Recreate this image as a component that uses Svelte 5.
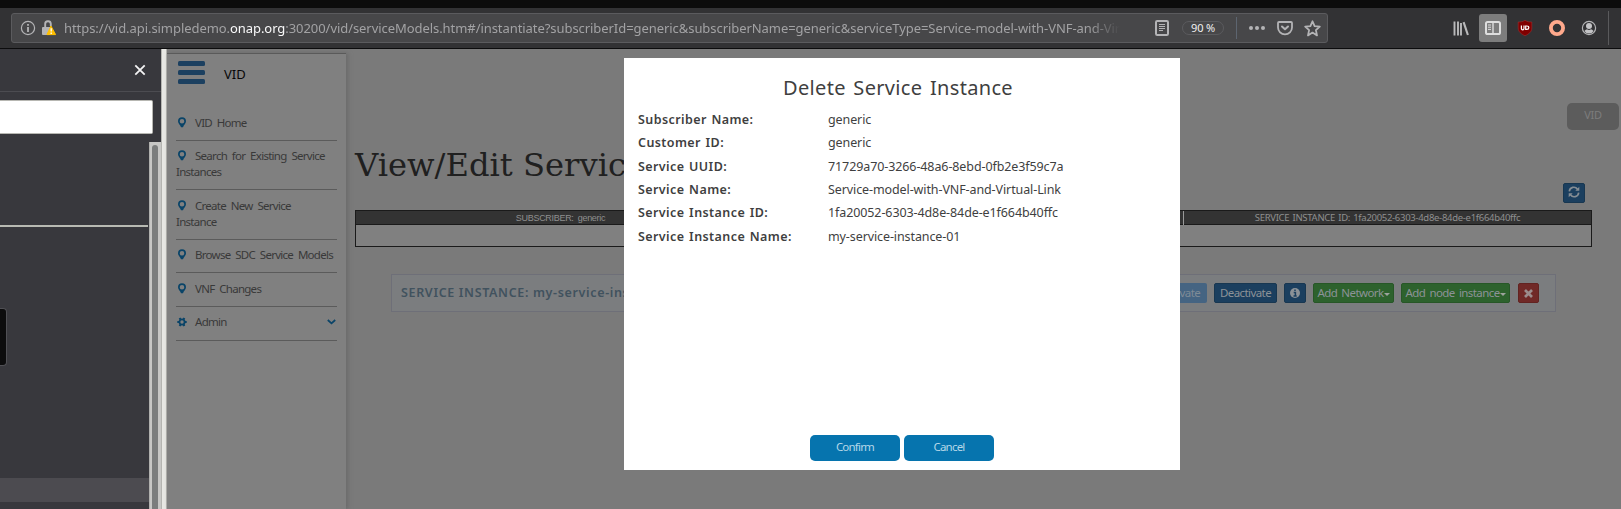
<script>
  const menu = [
    { label: 'VID Home', h: 34, top: 8 },
    { label: 'Search for Existing Service Instances', h: 49, top: 7 },
    { label: 'Create New Service Instance', h: 50, top: 8 },
    { label: 'Browse SDC Service Models', h: 33, top: 7 },
    { label: 'VNF Changes', h: 34, top: 8 },
    { label: 'Admin', h: 34, top: 7, gear: true }
  ];
  const details = [
    ['Subscriber Name:', 'generic'],
    ['Customer ID:', 'generic'],
    ['Service UUID:', '71729a70-3266-48a6-8ebd-0fb2e3f59c7a'],
    ['Service Name:', 'Service-model-with-VNF-and-Virtual-Link'],
    ['Service Instance ID:', '1fa20052-6303-4d8e-84de-e1f664b40ffc'],
    ['Service Instance Name:', 'my-service-instance-01']
  ];
</script>

<div class="window">
  <div class="tabs"></div>
  <header>
    <div class="urlbar">
      <svg class="info" width="16" height="16" viewBox="0 0 16 16" fill="none" stroke="#b4b4b6" stroke-width="1.2"><circle cx="8" cy="8" r="6.6" /><path d="M8 7v5M8 4v1.7" stroke-width="1.8" /></svg>
      <svg class="lock" width="16" height="16" viewBox="0 0 16 16"><path d="M4.2 8V4.2a2.800 2.800 0 0 1 5.600-.4V6" fill="none" stroke="#b4b4b6" stroke-width="1.9" /><rect x="1" y="7" width="9" height="8" rx="1" fill="#b4b4b6" /><path d="M10 6 14.600 14.600H5.900Z" fill="#ffbf00" stroke="#ffbf00" stroke-width="1" stroke-linejoin="round" /><path d="M10.2 8.3v3.2M10.2 12.5V14" stroke="#fff" stroke-width="1.3" /></svg>
      <div class="url">https://vid.api.simpledemo.<b>onap.org</b>:30200/vid/serviceModels.htm#/instantiate?subscriberId=generic&amp;subscriberName=generic&amp;serviceType=Service-model-with-VNF-and-Virtual</div>
      <svg class="reader" width="14" height="16" viewBox="0 0 14 16" fill="none" stroke="#b4b4b6"><rect x="1" y="1" width="12" height="14" rx="1.2" stroke-width="2" /><path d="M4 4.5h6M4 6.5h6M4 8.5h6M4 10.5h4" /></svg>
      <span class="zoom">90 %</span>
      <i class="vline"></i>
      <svg class="dots" width="16" height="16" viewBox="0 0 16 16" fill="#b4b4b6"><circle cx="2" cy="8" r="2" /><circle cx="8" cy="8" r="2" /><circle cx="14" cy="8" r="2" /></svg>
      <svg class="pocket" width="16" height="16" viewBox="0 0 16 16" fill="none" stroke="#b4b4b6" stroke-width="2" stroke-linejoin="round" stroke-linecap="round"><path d="M2 2h12q1 0 1 1v4.5a7 6.8 0 0 1-14 0V3q0-1 1-1Z" stroke-width="1.8" /><path d="m5 6.5 3 2.8 3-2.8" /></svg>
      <svg class="star" width="17" height="17" viewBox="0 0 17 17" fill="none" stroke="#b4b4b6" stroke-width="1.8" stroke-linejoin="round"><path d="m8.5 1.3 2.1 4.8 5.2.5-3.9 3.5 1.1 5.3-4.5-2.8L4 15.4l1.1-5.3-3.9-3.5 5.2-.5Z" /></svg>
    </div>
    <div class="tools">
      <svg width="16" height="16" viewBox="0 0 16 16" stroke="#b9b9ba" stroke-width="2" fill="none"><path d="M1.5 1.5v14M5 1.5v14M8 3v12.5" stroke-width="1.9" /><path d="m10.6 2.2 4.3 12.8" stroke-width="2.1" /></svg>
      <div class="active"><svg width="16" height="14" viewBox="0 0 16 14" stroke="#dedede" fill="none"><rect x="1" y="1" width="14" height="12" rx="1.6" stroke-width="2" /><path d="M8 1v12" stroke-width="1.4" /><path d="M3 4h3M3 6.2h3M3 8.4h3" /></svg></div>
      <svg class="shield" width="16" height="16" viewBox="0 0 16 16"><path d="M8 .3C10 1.8 12.500 2 14.800 2v6c0 4-3.200 6-6.800 7.800C4.400 14 1.200 12 1.200 8V2C3.500 2 6 1.800 8 .3Z" fill="#800000" stroke="#a33" stroke-width=".5" /><path d="M4.400 5.500v3q0 1.300 1.300 1.300t1.300-1.300v-3" fill="none" stroke="#fff" stroke-width="1.200" /><path d="M8.700 6h1.100q2 0 2 1.700t-2 1.700H8.700Z" fill="none" stroke="#fff" stroke-width="1.200" /></svg>
      <svg class="ring" width="16" height="16" viewBox="0 0 16 16"><circle cx="8" cy="8" r="6.100" fill="none" stroke="#ffa98c" stroke-width="3.800" /></svg>
      <svg class="user" width="16" height="16" viewBox="0 0 16 16"><circle cx="8" cy="8" r="6.600" fill="none" stroke="#b4b4b6" stroke-width="1.200" /><circle cx="8" cy="6" r="3" fill="#c4c4c6" /><path d="M3.400 11Q5 9.300 6 9.300q2 1.500 4 0 1 0 2.600 1.700Q11 13.500 8 13.500T3.400 11Z" fill="#c4c4c6" /></svg>
      <i></i>
    </div>
  </header>

  <div class="content">
    <aside class="panel">
      <div class="panelhead"><svg width="12" height="12" viewBox="0 0 12 12" stroke="#f4f4f5" stroke-width="1.800"><path d="m1.300 1.300 9.400 9.400M10.700 1.300 1.300 10.700" /></svg></div>
      <div class="search"></div>
      <div class="tree">
        <div class="list"><div class="rule"></div><div class="thumbbox"></div><div class="selected"></div></div>
        <div class="scroll"><i></i></div>
      </div>
    </aside>
    <div class="splitter"></div>

    <div class="page">
      <nav>
        <div class="brand">
          <div class="burger"><i></i><i></i><i></i></div>
          <span>VID</span>
        </div>
        <ul>
          {#each menu as m}
            <li style="height:{m.h}px;padding-top:{m.top}px">
              {#if m.gear}
                <svg width="10" height="10" viewBox="0 0 10 10" fill="none" stroke="#0a4468"><circle cx="5" cy="5" r="2.600" stroke-width="1.800" /><path d="M7.900 5H9.700M6.500 7.500l.9 1.600M3.500 7.500l-.9 1.600M2.100 5H.3M3.500 2.500 2.600.9M6.500 2.500l.9-1.600" stroke-width="2" /></svg>
              {:else}
                <svg width="10" height="11" viewBox="0 0 10 11" fill="#0a4468" fill-rule="evenodd"><path d="M5 .3a4 4 0 0 1 4 4C9 6.700 6.800 7.600 6 10.200H4C3.200 7.600 1 6.700 1 4.300a4 4 0 0 1 4-4ZM5 2a2.300 2.300 0 1 0 0 4.600A2.300 2.300 0 0 0 5 2Z" /></svg>
              {/if}<span>{m.label}</span>
              {#if m.gear}<svg class="chev" width="9" height="6" viewBox="0 0 9 6" fill="none" stroke="#0a4468" stroke-width="1.800"><path d="m.8 1 3.700 3.300L8.200 1" /></svg>{/if}
            </li>
          {/each}
        </ul>
      </nav>

      <main>
        <div class="user-row"><span class="vidbtn">VID</span></div>
        <div class="title-row">
          <h1>View/Edit Service</h1>
          <span class="btn blue refresh"><svg width="12" height="12" viewBox="0 0 12 12" fill="none" stroke="#858d94" stroke-width="1.600"><path d="M1.300 5.300A4.500 4.500 0 0 1 9.500 3.200M10.700 6.700A4.500 4.500 0 0 1 2.500 8.800" /><path d="M11.300.8v4H7.300ZM.7 11.200v-4h4Z" fill="#858d94" stroke="none" /></svg></span>
        </div>
        <div class="table">
          <div class="thead"><span>SUBSCRIBER: generic</span><span></span><span class="sid">SERVICE INSTANCE ID: 1fa20052-6303-4d8e-84de-e1f664b40ffc</span></div>
          <div class="tbody"></div>
        </div>
        <div class="instance">
          <strong>SERVICE INSTANCE: my-service-instance-01</strong>
          <div class="actions">
            <span class="btn faded" style="width:52px">Activate</span>
            <span class="btn blue" style="width:63px">Deactivate</span>
            <span class="btn blue" style="width:22px"><svg width="10" height="10" viewBox="0 0 10 10"><circle cx="5" cy="5" r="5" fill="#8c9297" /><path d="M5 1.400v1.700M3.700 4.400h1.700v3.200M3.500 7.900h3.200" stroke="#1c4060" stroke-width="1.500" fill="none" /></svg></span>
            <span class="btn green" style="width:81px">Add Network<i></i></span>
            <span class="btn green" style="width:109px">Add node instance<i></i></span>
            <span class="btn red" style="width:21px"><svg width="9" height="9" viewBox="0 0 9 9" stroke="#9b8c8c" stroke-width="2.700"><path d="m1 1 7 7M8 1 1 8" /></svg></span>
          </div>
        </div>
      </main>

      <div class="modal" role="dialog">
        <h2>Delete Service Instance</h2>
        <dl>
          {#each details as [k, v]}
            <dt>{k}</dt><dd>{v}</dd>
          {/each}
        </dl>
        <div class="foot"><button>Confirm</button><button>Cancel</button></div>
      </div>
    </div>
  </div>
</div>

<style>
  :global(body) { margin: 0; overflow: hidden; background: #7a7a7a; }
  * { box-sizing: border-box; }
  svg { display: block; flex: none; }
  .window { width: 1621px; height: 509px; overflow: hidden; display: flex; flex-direction: column; font-family: 'Noto Sans', sans-serif; }
  .tabs { height: 8px; background: #0c0c0c; }
  header { height: 41px; background: #323234; border-bottom: 1px solid #0c0c0d; display: flex; padding: 5px 0 0 11px; }
  .urlbar { width: 1317px; flex: none; height: 30px; border: 1px solid #5b5b5e; border-radius: 3px; background: #474749; display: flex; align-items: center; }
  .info { margin-left: 8px; }
  .lock { margin-left: 5px; }
  .url { margin-left: 7px; width: 1056px; font-size: 13px; letter-spacing: -.06px; line-height: 28px; color: #a2a2a4; white-space: nowrap; overflow: hidden; -webkit-mask-image: linear-gradient(to right, #000 97%, transparent); mask-image: linear-gradient(to right, #000 97%, transparent); }
  .url b { font-weight: 400; color: #f9f9fa; }
  .reader { margin-left: 35px; }
  .zoom { margin-left: 13px; width: 42px; height: 14px; border: 1px solid #5b5b5e; border-radius: 7px; font-size: 11px; letter-spacing: -.2px; line-height: 11px; text-align: center; color: #f0f0f0; }
  .vline { width: 1px; height: 22px; margin: 0 12px; background: #5d6570; }
  .pocket { margin-left: 12px; }
  .star { margin-left: 11px; }
  .tools { display: flex; align-items: center; height: 30px; margin-left: 125px; }
  .active { width: 28px; height: 28px; border-radius: 3px; background: #7d7d7d; display: flex; align-items: center; justify-content: center; margin: 0 10px 0 10px; }
  .ring { margin-left: 16px; }
  .user { margin-left: 16px; }
  .tools i { width: 1px; height: 34px; background: #5a5a5c; margin-left: 11px; }

  .content { flex: 1; display: flex; }
  .panel { width: 161px; background: #38383d; display: flex; flex-direction: column; }
  .panelhead { height: 43px; border-bottom: 1px solid #4c4c51; padding: 15px 0 0 134px; }
  .search { width: 153px; height: 34px; margin-top: 8px; background: #fff; border: 1px solid #b7b7b2; border-left: 0; border-radius: 0 2px 2px 0; }
  .tree { flex: 1; margin-top: 8px; display: flex; }
  .list { width: 149px; }
  .rule { height: 2px; width: 148px; margin-top: 83px; background: #b8bab3; }
  .thumbbox { width: 7px; height: 58px; margin-top: 81px; background: #0c0c0d; border: 1px solid #505055; border-left: 0; border-radius: 0 4px 4px 0; }
  .selected { height: 24px; margin-top: 112px; background: #4c4b50; }
  .scroll { width: 12px; background: #c7c7c5; border-left: 1px solid #b0b0ae; padding: 3px 3px 0 2px; }
  .scroll i { display: block; width: 6px; height: 100%; background: #7b7d7d; border-radius: 3px 3px 0 0; }
  .splitter { width: 6px; background: #e8e8e4; border: solid #b5b5b1; border-width: 0 1px; }

  .page { flex: 1; background: #7a7a7a; display: flex; position: relative; }
  nav { width: 179px; margin-top: 4px; background: #808080; border-top: 1px solid #5a5a5a; box-shadow: 2px 0 4px #6a6a6a; }
  .brand { height: 53px; display: flex; padding: 7px 0 0 11px; }
  .burger { width: 27px; }
  .burger i { display: block; height: 5px; margin-bottom: 4px; border-radius: 1.500px; background: #1c4060; }
  .brand span { margin: 3px 0 0 19px; font-size: 13px; line-height: 20px; color: #080808; }
  ul { list-style: none; margin: 0; padding: 0 9px; }
  li { border-bottom: 1px solid #5b5b5b; padding-right: 3px; font-size: 11.500px; line-height: 16px; letter-spacing: -.72px; word-spacing: 2.500px; color: #393939; position: relative; }
  li svg { display: inline-block; vertical-align: -1px; margin: 0 9px 0 1px; }
  li span { margin-left: -1px; }
  li .chev { position: absolute; right: 1px; top: 12px; margin: 0; }

  main { width: 1275px; }
  .user-row { height: 81px; padding: 54px 2px 0 0; display: flex; justify-content: flex-end; }
  .vidbtn { width: 52px; height: 27px; border-radius: 5px; background: #5c5c5c; color: #7c7c7c; font-size: 11px; letter-spacing: -.3px; line-height: 24px; text-align: center; }
  .title-row { height: 80px; padding: 9px 36px 0 9px; display: flex; justify-content: space-between; }
  h1 { margin: 1px 0 0; font: 400 32.200px/50px 'DejaVu Serif', serif; color: #202020; }
  .refresh { width: 22px; margin-top: 44px; padding-bottom: 2px; }
  .table { margin: 0 29px 0 9px; border: 1px solid #1a1a1a; height: 37px; }
  .thead { height: 14px; background: #333; border-bottom: 1px solid #1a1a1a; display: grid; grid-template-columns: 409px 418px 1fr; font: 9px/14px 'Liberation Sans', sans-serif; letter-spacing: -.3px; word-spacing: 2px; color: #8f8f8f; text-align: center; }
  .thead .sid { font: 9.500px/13px 'Noto Sans', sans-serif; letter-spacing: -.29px; word-spacing: 1px; border-left: 1px solid #999; }
  .tbody { height: 21px; background: #808080; }
  .instance { width: 1165px; height: 38px; margin: 27px 0 0 45px; border: 1px solid #6e6f78; background: #7b7d7f; display: flex; align-items: center; justify-content: space-between; padding: 0 16px 0 9px; }
  strong { font-size: 12.500px; font-weight: 600; line-height: 18px; letter-spacing: .65px; color: #41525e; padding-bottom: 1px; }
  .actions { display: flex; gap: 7px; }
  .btn { height: 20px; border-radius: 2px; display: flex; align-items: center; justify-content: center; font-size: 11.500px; letter-spacing: -.58px; word-spacing: 1.800px; line-height: 16px; color: #8c9297; white-space: nowrap; }
  .blue { background: #1b3f5f; border: 1px solid #183751; }
  .faded { background: #456482; color: #7f8b96; }
  .green { background: #2d622d; border: 1px solid #275727; }
  .red { background: #702927; border: 1px solid #622321; margin-left: 1px; }
  .btn i { border: solid transparent; border-width: 3px 3px 0; border-top-color: #9da39d; margin-top: 2px; }

  .modal { position: absolute; left: 457px; top: 9px; width: 556px; height: 412px; background: #fff; color: #3f3f3f; padding: 16px 14px 9px 14px; display: flex; flex-direction: column; }
  h2 { margin: 0 8px 0 0; font-size: 20px; line-height: 28px; font-weight: 400; text-align: center; letter-spacing: .33px; word-spacing: 2px; }
  dl { margin: 5.850px 0 0; display: grid; grid-template-columns: 190px 1fr; grid-auto-rows: 23.400px; font-size: 12.500px; line-height: 23px; flex: 1; }
  dt { font-weight: 600; letter-spacing: .41px; word-spacing: 1px; }
  dd { margin: 0; letter-spacing: -.1px; }
  .foot { display: flex; gap: 4px; padding-left: 172px; }
  button { width: 90px; height: 26px; border: 0; border-radius: 5px; background: #0674ae; color: #b5d7e8; font: 11.500px 'Noto Sans', sans-serif; letter-spacing: -.8px; padding: 0 0 3px; }
</style>
